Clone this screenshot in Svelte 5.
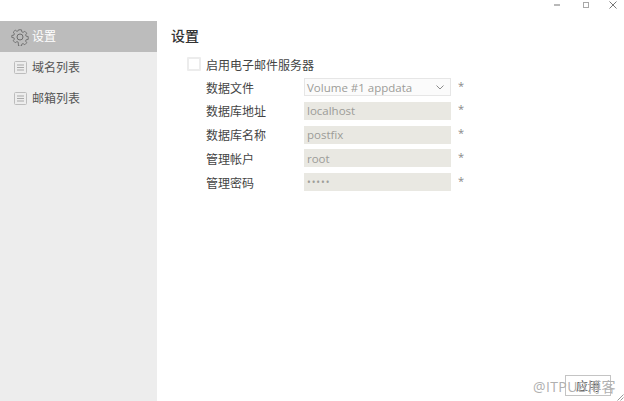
<script>
  const fields = [
    { label: '数据库地址', value: 'localhost' },
    { label: '数据库名称', value: 'postfix' },
    { label: '管理帐户', value: 'root' },
    { label: '管理密码', value: '•••••', secret: true }
  ];
</script>

<div class="window">
  <header class="titlebar">
    <svg class="ctl" width="10" height="10" viewBox="0 0 10 10"><path d="M0 5h6" stroke="#b9b9b9" stroke-width="2" /></svg>
    <svg class="ctl" width="10" height="10" viewBox="0 0 10 10"><rect x="2.5" y="2.5" width="5" height="5" fill="none" stroke="#a8a8a8" /></svg>
    <svg class="ctl" width="10" height="10" viewBox="0 0 10 10"><path d="M1.5 1.5l7 7M8.5 1.5l-7 7" stroke="#777" /></svg>
  </header>
  <div class="body">
    <nav class="sidebar">
      <div class="item active">
        <svg class="gear" width="18" height="18" viewBox="0 0 18 18" fill="none" stroke="#6d6d6d">
          <circle cx="9" cy="9" r="3" />
          <path d="M7.4 1h3.2l.4 2.3 1.4.6 1.9-1.300 2.200 2.200-1.300 1.900.6 1.400 2.300.4v3.200l-2.300.4-.6 1.400 1.300 1.900-2.200 2.200-1.900-1.300-1.400.6-.4 2.300H7.400L7 14.700l-1.400-.6-1.900 1.300-2.200-2.200 1.300-1.900-.6-1.400-2.300-.4V7.300l2.300-.4.6-1.400-1.300-1.900 2.200-2.200 1.900 1.300 1.400-.6z" transform="translate(.9 .9) scale(.9)" />
        </svg>
        <span>设置</span>
      </div>
      <div class="item">
        <svg class="list" width="13" height="13" viewBox="0 0 13 13" fill="none" stroke="#bdbdbd">
          <rect x=".5" y=".5" width="12" height="12" rx="1" />
          <path d="M3 4h7M3 6.500h7M3 9h7" stroke="#a9a9a9" />
        </svg>
        <span>域名列表</span>
      </div>
      <div class="item">
        <svg class="list" width="13" height="13" viewBox="0 0 13 13" fill="none" stroke="#bdbdbd">
          <rect x=".5" y=".5" width="12" height="12" rx="1" />
          <path d="M3 4h7M3 6.500h7M3 9h7" stroke="#a9a9a9" />
        </svg>
        <span>邮箱列表</span>
      </div>
    </nav>
    <main class="content">
      <h1>设置</h1>
      <div class="enable">
        <span class="check"></span>
        <span>启用电子邮件服务器</span>
      </div>
      <div class="form">
        <div class="row">
          <span class="label">数据文件</span>
          <div class="select">
            <span>Volume #1 appdata</span>
            <svg width="8" height="5" viewBox="0 0 8 5" fill="none" stroke="#8c8c8c"><path d="M.5.5L4 4 7.500.5" /></svg>
          </div>
          <span class="req">*</span>
        </div>
        {#each fields as f}
          <div class="row">
            <span class="label">{f.label}</span>
            <div class="input" class:secret={f.secret}>{f.value}</div>
            <span class="req">*</span>
          </div>
        {/each}
      </div>
      <div class="footer">
        <button>应用</button>
        <span class="mark">@ITPUB博客</span>
      </div>
    </main>
  </div>
  <svg class="grip" width="8" height="8" viewBox="0 0 8 8" stroke="#9a9a9a"><path d="M7.500 1.500l-6 6M7.500 4.500l-3 3" /></svg>
</div>

<style>
  :global(body) {
    background: #fff;
  }
  .window {
    position: relative;
    width: 624px;
    height: 401px;
    display: flex;
    flex-direction: column;
    overflow: hidden;
    font-family: "Noto Sans CJK SC", "Open Sans", sans-serif;
    font-size: 12px;
    color: #444;
  }
  .titlebar {
    height: 21px;
    flex: none;
    display: flex;
    justify-content: flex-end;
    align-items: flex-start;
    gap: 17px;
    padding: 0 6px 0 0;
    box-sizing: border-box;
  }
  .ctl {
    margin-top: 0;
  }
  .body {
    flex: 1;
    display: flex;
    min-height: 0;
  }
  .sidebar {
    width: 157px;
    flex: none;
    background: #ededed;
  }
  .item {
    height: 31px;
    display: flex;
    align-items: center;
    padding-left: 14px;
    gap: 5px;
    color: #555;
  }
  .item span {
    margin-top: -2px;
  }
  .item.active {
    background: #bcbcbc;
    color: #fff;
    padding-left: 11px;
    gap: 3px;
  }
  .content {
    flex: 1;
    padding: 0 0 0 14px;
    display: flex;
    flex-direction: column;
  }
  h1 {
    margin: 4px 0 0;
    font-size: 14px;
    line-height: 20px;
    font-weight: 500;
    color: #333;
  }
  .enable {
    margin: 10px 0 0 16px;
    height: 18px;
    display: flex;
    align-items: center;
    gap: 5px;
  }
  .check {
    width: 10px;
    height: 10px;
    border: 2px solid #ececec;
    border-radius: 1px;
  }
  .form {
    margin: 5px 0 0 35px;
    display: flex;
    flex-direction: column;
    gap: 5.2px;
  }
  .row {
    display: flex;
    align-items: center;
    height: 18.5px;
  }
  .label {
    width: 98px;
    flex: none;
  }
  .select,
  .input {
    width: 147px;
    height: 18px;
    box-sizing: border-box;
    padding: 0 3px;
    display: flex;
    align-items: center;
    font-family: "Open Sans", sans-serif;
    font-size: 11.5px;
    color: #9c9c98;
  }
  .select {
    justify-content: space-between;
    border: 1px solid #e6e6e6;
    background: #fbfbfb;
    padding: 0 6px 0 2px;
  }
  .input {
    background: #e9e8e2;
  }
  .secret {
    font-size: 10px;
    letter-spacing: 0.9px;
  }
  .req {
    margin: -4px 0 0 7px;
    color: #888;
    font-family: "Open Sans", sans-serif;
    font-size: 11px;
  }
  .footer {
    margin-top: auto;
    position: relative;
    height: 26px;
    display: flex;
    justify-content: flex-end;
    padding-right: 13px;
  }
  button {
    width: 46px;
    height: 21px;
    border: 1px solid #c4c4c4;
    background: #fff;
    padding: 0;
    font: inherit;
    color: #555;
  }
  .mark {
    position: absolute;
    right: 8px;
    top: 1px;
    color: #b0b0b0;
    font-size: 14px;
    letter-spacing: 0.4px;
    font-family: "Open Sans", "Noto Sans CJK SC", sans-serif;
    white-space: nowrap;
  }
  .grip {
    position: absolute;
    right: 0;
    bottom: 0;
  }
</style>
